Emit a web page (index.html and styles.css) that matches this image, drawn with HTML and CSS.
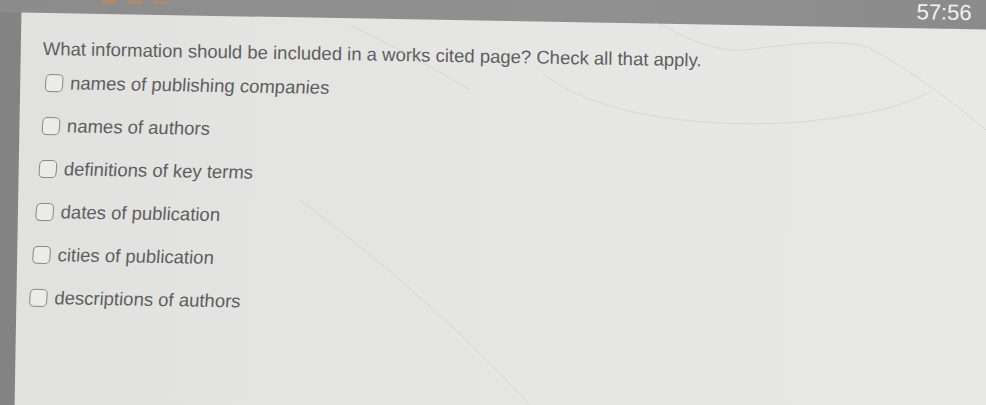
FILE: index.html
```html
<!DOCTYPE html>
<html>
<head>
<meta charset="utf-8">
<link rel="stylesheet" href="styles.css">
</head>
<body>
<div class="frame">
  <div class="screen">
    <div class="topbar">
      <div class="tabs">
        <span class="tab"></span><span class="tab"></span><span class="tab"></span>
      </div>
      <div class="time">57:56</div>
    </div>
    <div class="main">
      <div class="side"></div>
      <div class="panel">
        <p class="question">What information should be included in a works cited page? Check all that apply.</p>
        <ul class="options">
          <li class="opt"><span class="box"></span><span class="label">names of publishing companies</span></li>
          <li class="opt"><span class="box"></span><span class="label">names of authors</span></li>
          <li class="opt"><span class="box"></span><span class="label">definitions of key terms</span></li>
          <li class="opt"><span class="box"></span><span class="label">dates of publication</span></li>
          <li class="opt"><span class="box"></span><span class="label">cities of publication</span></li>
          <li class="opt"><span class="box"></span><span class="label">descriptions of authors</span></li>
        </ul>
      </div>
    </div>
  </div>
  <svg class="glare" width="986" height="405" viewBox="0 0 986 405">
    <path d="M655 22 C 690 40, 715 52, 745 50 C 790 44, 840 38, 870 48 C 910 70, 950 100, 986 130" />
    <path d="M540 70 C 580 110, 690 130, 800 122 C 860 116, 900 108, 930 92" />
    <path d="M300 200 C 380 260, 450 320, 530 405" />
    <path d="M350 25 C 380 40, 420 60, 470 90" />
  </svg>
</div>
</body>
</html>
```
FILE: styles.css
```css
html, body {
  margin: 0;
  padding: 0;
  background: #8b8b8b;
}
.frame {
  position: relative;
  width: 986px;
  height: 405px;
  overflow: hidden;
}
.screen {
  width: 1040px;
  height: 470px;
  margin: -20px 0 0 -10px;
  transform: rotate(1deg);
  transform-origin: 0 0;
  display: flex;
  flex-direction: column;
  font-family: "Liberation Sans", Arial, sans-serif;
}
.topbar {
  height: 32px;
  flex: none;
  background: linear-gradient(90deg, #8c8c8c, #909090 60%, #8a8a8a);
  display: flex;
  justify-content: space-between;
  align-items: flex-start;
}
.tabs {
  display: flex;
  gap: 12px;
  padding: 18px 0 0 112px;
}
.tab {
  width: 14px;
  height: 3px;
  background: #d98a4a;
  opacity: 0.5;
}
.time {
  color: #f2f2f2;
  font-size: 22px;
  line-height: 24px;
  padding: 4px 58px 0 0;
}
.main {
  flex: 1;
  display: flex;
}
.side {
  width: 32px;
  flex: none;
  background: #838383;
}
.panel {
  flex: 1;
  background: linear-gradient(90deg, #e1e1df, #e6e6e4 50%, #e8e8e6);
  padding: 25px 0 0 22px;
}
.question {
  margin: 0;
  font-size: 18.5px;
  line-height: 22px;
  color: #5e5e5e;
}
.options {
  list-style: none;
  margin: 12px 0 0 0;
  padding: 0 0 0 3px;
  display: flex;
  flex-direction: column;
  gap: 21px;
  transform: skewX(-3.2deg);
  transform-origin: 0 11px;
}
.opt {
  display: flex;
  align-items: center;
  height: 22px;
}
.box {
  width: 16px;
  height: 16px;
  border: 1.5px solid #888;
  border-radius: 5px;
  background: #ebebe9;
  flex: none;
}
.label {
  margin-left: 7px;
  font-size: 18.5px;
  line-height: 22px;
  color: #5e5e5e;
}
.glare {
  position: absolute;
  left: 0;
  top: 0;
  pointer-events: none;
}
.glare path {
  fill: none;
  stroke: #c4c4c2;
  stroke-width: 1;
  opacity: 0.45;
}
```
